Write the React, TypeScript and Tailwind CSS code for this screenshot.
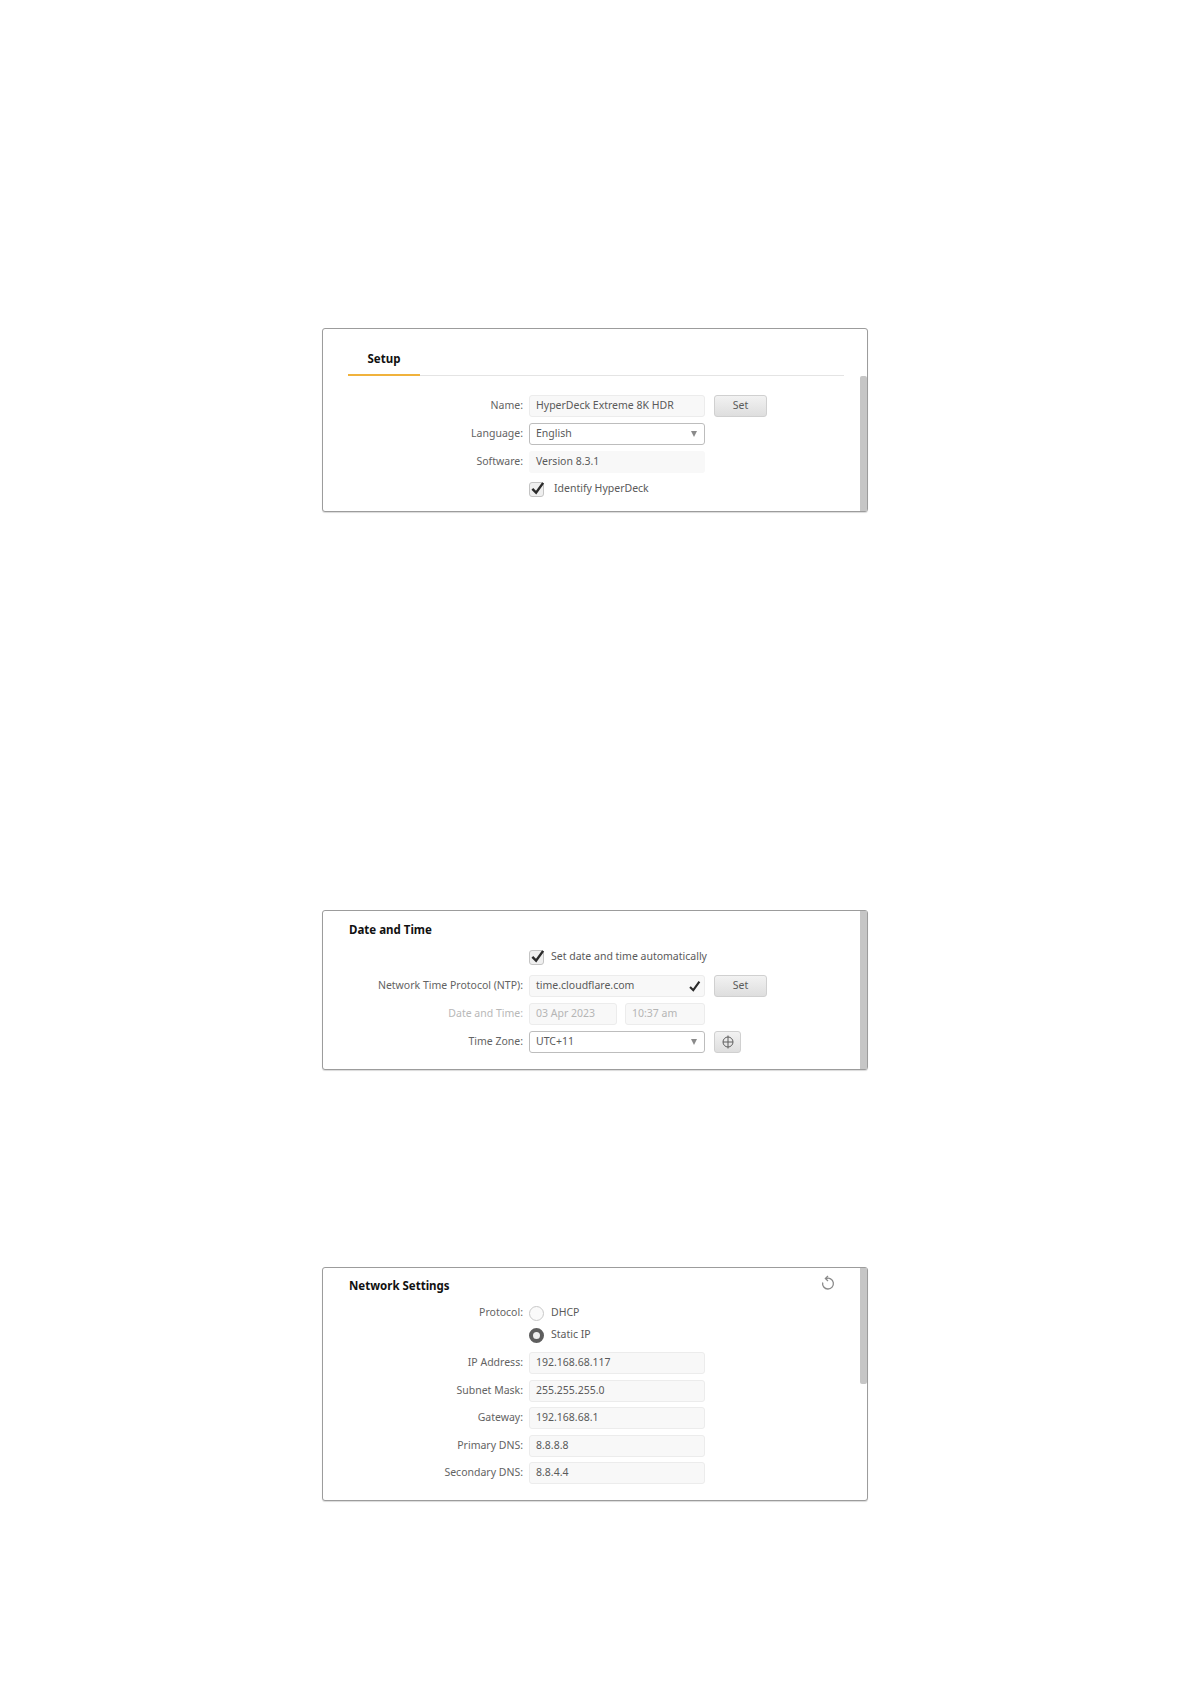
import React from 'react';

const Field = ({ value, faded, width = 'w-[176px]', outlined, children }: { value: string; faded?: boolean; width?: string; outlined?: boolean; children?: React.ReactNode }) => (
  <div
    className={`flex h-[22px] items-center justify-between rounded-[3px] pl-[6px] pr-[3px] text-[10.5px] ${width} ${
      outlined ? 'border border-[#bdbdbd] bg-white' : 'border border-[#ececec] bg-[#f8f8f8]'
    } ${faded ? 'text-[#b5b5b5]' : 'text-[#5a5a5a]'}`}
  >
    <span>{value}</span>
    {children}
  </div>
);

const Row = ({ label, faded, children }: { label: string; faded?: boolean; children: React.ReactNode }) => (
  <div className="flex h-[22px] items-center">
    <div className={`w-[200px] text-right text-[10.5px] ${faded ? 'text-[#b8b8b8]' : 'text-[#636363]'}`}>{label}</div>
    <div className="ml-[6px] flex items-center">{children}</div>
  </div>
);

const SetButton = () => (
  <div className="ml-[9px] flex h-[22px] w-[53px] items-center justify-center rounded-[3px] border border-[#d0d0d0] bg-gradient-to-b from-[#f2f2f2] to-[#dedede] text-[10.5px] text-[#5a5a5a]">
    Set
  </div>
);

const Caret = () => <div className="mr-[4px] h-0 w-0 border-x-[3.5px] border-t-[6px] border-x-transparent border-t-[#8a8a8a]" />;

const Tick = ({ className }: { className: string }) => (
  <svg viewBox="0 0 16 16" className={className} fill="none" stroke="#2b2b2b" strokeWidth="2.6">
    <path d="M2.5 8.5L6.5 12.5L14 2" />
  </svg>
);

const CheckBox = () => (
  <div className="relative h-[15px] w-[15px] rounded-[3px] border border-[#c4c4c4] bg-[#efefef]">
    <Tick className="absolute -top-[2px] left-0 h-[15px] w-[15px]" />
  </div>
);

const Panel = ({ className, children }: { className: string; children: React.ReactNode }) => (
  <div className={`relative ml-[322px] w-[546px] rounded-[3px] border border-[#9c9c9c] bg-white shadow-[0_1px_1px_rgba(0,0,0,0.15)] ${className}`}>{children}</div>
);

export default function App() {
  return (
    <div className="min-h-[1684px] bg-white pt-[328px] text-[#5a5a5a] [font-family:'Noto_Sans',sans-serif]">
      <Panel className="h-[184px]">
        <div className="absolute bottom-0 right-0 top-[47px] w-[7px] rounded-t-[2px] bg-[#c6c6c6]" />
        <div className="ml-[25px] mr-[23px] flex h-[47px] border-b border-[#e4e4e4]">
          <div className="-mb-px flex w-[72px] items-center justify-center border-b-2 border-[#f0b23c] pt-[15px] text-[11.5px] font-bold text-[#111111]">Setup</div>
        </div>
        <div className="mt-[19px] flex flex-col gap-[6px]">
          <Row label="Name:">
            <Field value="HyperDeck Extreme 8K HDR" />
            <SetButton />
          </Row>
          <Row label="Language:">
            <Field value="English" outlined>
              <Caret />
            </Field>
          </Row>
          <Row label="Software:">
            <div className="flex h-[22px] w-[176px] items-center rounded-[3px] bg-[#f8f8f8] pl-[7px] text-[10.5px] text-[#5a5a5a]">Version 8.3.1</div>
          </Row>
          <div className="ml-[206px] flex h-[20px] items-center">
            <CheckBox />
            <span className="ml-[10px] text-[10.5px] text-[#5a5a5a]">Identify HyperDeck</span>
          </div>
        </div>
      </Panel>

      <Panel className="mt-[398px] h-[160px]">
        <div className="absolute bottom-0 right-0 top-0 w-[7px] bg-[#c6c6c6]" />
        <div className="pl-[26px] pt-[10px] text-[11.5px] font-bold text-[#111111]">Date and Time</div>
        <div className="ml-[206px] mt-[9px] flex h-[20px] items-center">
          <CheckBox />
          <span className="ml-[7px] text-[10.5px] text-[#5a5a5a]">Set date and time automatically</span>
        </div>
        <div className="mt-[8px] flex flex-col gap-[6px]">
          <Row label="Network Time Protocol (NTP):">
            <Field value="time.cloudflare.com">
              <Tick className="h-[13px] w-[13px]" />
            </Field>
            <SetButton />
          </Row>
          <Row label="Date and Time:" faded>
            <Field value="03 Apr 2023" width="w-[88px]" faded />
            <div className="ml-[8px]">
              <Field value="10:37 am" width="w-[80px]" faded />
            </div>
          </Row>
          <Row label="Time Zone:">
            <Field value="UTC+11" outlined>
              <Caret />
            </Field>
            <div className="ml-[9px] flex h-[22px] w-[27px] items-center justify-center rounded-[3px] border border-[#d0d0d0] bg-gradient-to-b from-[#f2f2f2] to-[#dedede]">
              <svg viewBox="0 0 14 14" className="h-[14px] w-[14px]" fill="none" stroke="#5f5f5f" strokeWidth="1">
                <circle cx="7" cy="7" r="5" />
                <path d="M7 0.5V13.5M2 7H12" />
              </svg>
            </div>
          </Row>
        </div>
      </Panel>

      <Panel className="mt-[197px] h-[234px]">
        <div className="absolute right-0 top-0 h-[116px] w-[7px] rounded-b-[2px] bg-[#c6c6c6]" />
        <svg viewBox="0 0 16 16" className="absolute right-[31px] top-[7px] h-[16px] w-[16px]" fill="none" stroke="#8a8a8a" strokeWidth="1.3">
          <path d="M6 3.6A5.4 5.4 0 1 1 2.7 7.5" />
          <path d="M8 1L5.4 3.6L8 6" />
        </svg>
        <div className="pl-[26px] pt-[9px] text-[11.5px] font-bold text-[#111111]">Network Settings</div>
        <div className="mt-[9px] flex h-[20px] items-center">
          <div className="w-[200px] text-right text-[10.5px] text-[#636363]">Protocol:</div>
          <div className="ml-[6px] h-[15px] w-[15px] rounded-full border border-[#c8c8c8] bg-[#fafafa]" />
          <span className="ml-[7px] text-[10.5px] text-[#5a5a5a]">DHCP</span>
        </div>
        <div className="ml-[206px] mt-[2px] flex h-[20px] items-center">
          <div className="h-[15px] w-[15px] rounded-full border-[4px] border-[#5e5e5e] bg-[#efefef]" />
          <span className="ml-[7px] text-[10.5px] text-[#5a5a5a]">Static IP</span>
        </div>
        <div className="mt-[7px] flex flex-col gap-[5.5px]">
          <Row label="IP Address:"><Field value="192.168.68.117" /></Row>
          <Row label="Subnet Mask:"><Field value="255.255.255.0" /></Row>
          <Row label="Gateway:"><Field value="192.168.68.1" /></Row>
          <Row label="Primary DNS:"><Field value="8.8.8.8" /></Row>
          <Row label="Secondary DNS:"><Field value="8.8.4.4" /></Row>
        </div>
      </Panel>
    </div>
  );
}
